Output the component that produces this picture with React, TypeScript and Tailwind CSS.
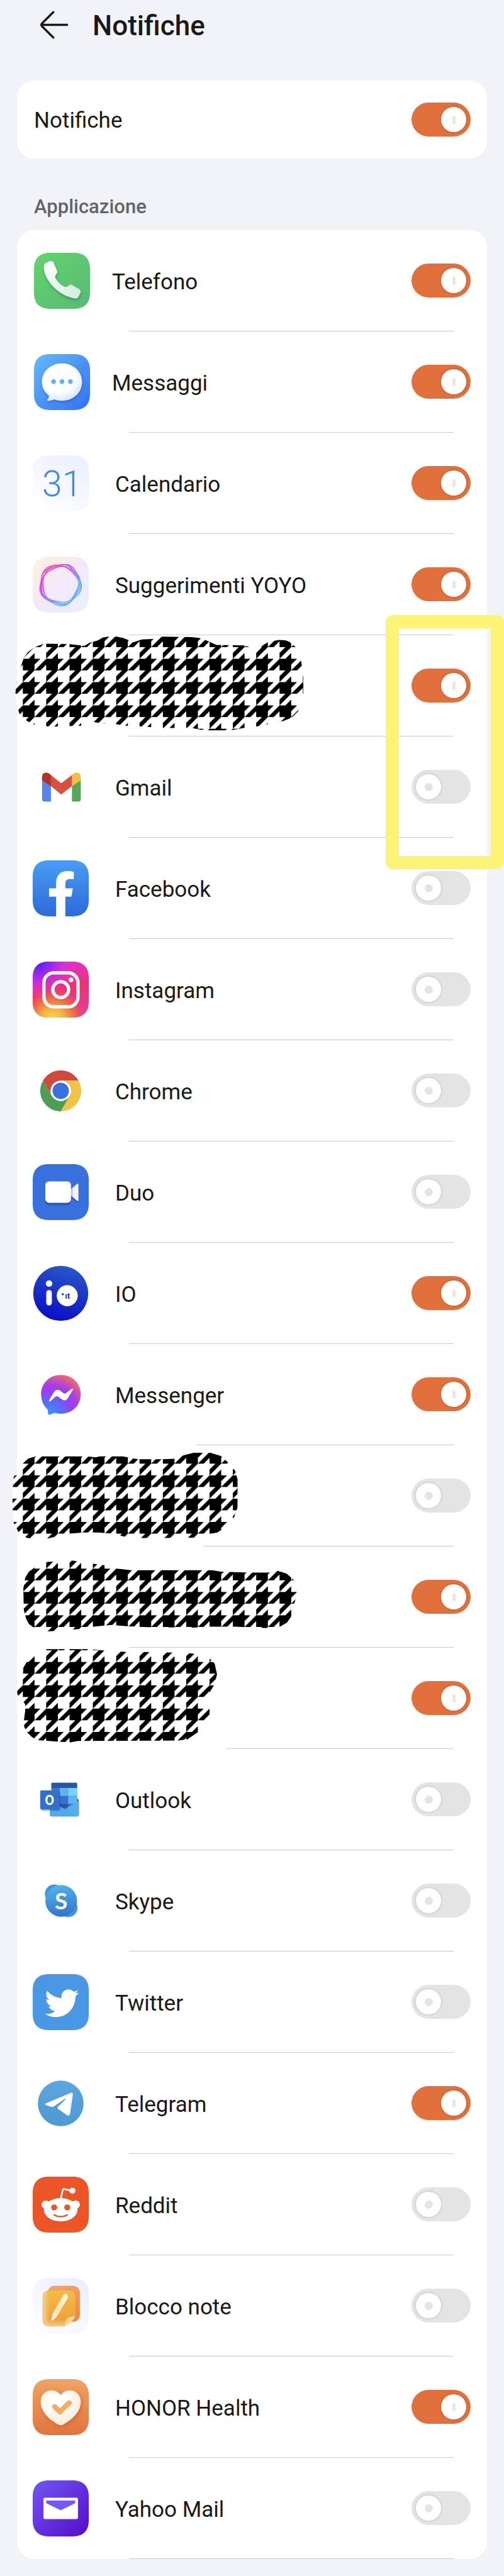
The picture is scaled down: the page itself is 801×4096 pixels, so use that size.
import { useId, useState } from 'react'
import type { ReactNode } from 'react'
import { FaTwitter } from 'react-icons/fa'

/* ---------- App icons, all on a 120x120 grid ---------- */

const Tile = ({ fill }: { fill: string }) => (
    <path
        d="M34 0 H86 C108 0 120 12 120 34 V86 C120 108 108 120 86 120 H34 C12 120 0 108 0 86 V34 C0 12 12 0 34 0Z"
        fill={fill}
    />
)

const PhoneIcon = () => (
    <>
        <defs>
            <linearGradient id="phone-bg" x1="0" y1="0" x2="1" y2="1">
                <stop offset="0" stopColor="#62d46c" />
                <stop offset="1" stopColor="#59b978" />
            </linearGradient>
            <linearGradient id="phone-fg" x1="0" y1="0" x2="1" y2="1">
                <stop offset="0" stopColor="#ffffff" />
                <stop offset="1" stopColor="#cfeedd" />
            </linearGradient>
        </defs>
        <Tile fill="url(#phone-bg)" />
        <path
            d="M34 18 C28 20 21 22 21 30 C21 58 52 92 88 98 C93 98 95 96 97 91 L100 85 Q101 80 95 77 L82 69 Q79 67 75 70 Q70 74 66 73 C58 69 50 62 46 54 Q44 50 49 44 Q51 41 49 37 L42 21 Q40 16 34 18Z"
            fill="url(#phone-fg)"
            style={{ filter: 'drop-shadow(1px 4px 3px rgba(30,110,60,.45))' }}
        />
    </>
)

const MessagesIcon = () => (
    <>
        <defs>
            <linearGradient id="msg-bg" x1="0" y1="0" x2="1" y2="1">
                <stop offset="0" stopColor="#64b9f9" />
                <stop offset="1" stopColor="#3470f4" />
            </linearGradient>
            <radialGradient id="msg-fg" cx="0.4" cy="0.35" r="0.7">
                <stop offset="0.6" stopColor="#ffffff" />
                <stop offset="1" stopColor="#d3e6f6" />
            </radialGradient>
        </defs>
        <Tile fill="url(#msg-bg)" />
        <path
            d="M60 20 C84 20 103 37 103 60 C103 83 84 100 60 100 Q51 100 43 97 Q36 101 29 100 Q27 99 29 97 Q33 93 32 89 C22 82 17 71 17 60 C17 37 36 20 60 20Z"
            fill="url(#msg-fg)"
            style={{ filter: 'drop-shadow(1px 3px 3px rgba(20,60,170,.4))' }}
        />
        <circle cx="42" cy="59" r="5" fill="#62b2ee" />
        <circle cx="60" cy="59" r="5" fill="#62b2ee" />
        <circle cx="78" cy="59" r="5" fill="#62b2ee" />
    </>
)

const CalendarIcon = () => (
    <>
        <defs>
            <linearGradient id="cal-bg" x1="0.9" y1="0" x2="0.2" y2="1">
                <stop offset="0" stopColor="#ebeeff" />
                <stop offset="1" stopColor="#ffffff" />
            </linearGradient>
        </defs>
        <Tile fill="url(#cal-bg)" />
        <text x="63" y="88" textAnchor="middle" fontSize="77" fontWeight="300" fill="#3f8ae6">31</text>
    </>
)

// Closed loop around the icon's centre, pushed in and out by a sine
const wavyLoop = (radius: number, swing: number, lobes: number, phase: number) => {
    const points: string[] = []
    for (let deg = 0; deg < 360; deg += 4) {
        const a = (deg * Math.PI) / 180
        const r = radius + swing * Math.sin(lobes * a + phase)
        points.push(`${(59 + r * Math.cos(a)).toFixed(1)} ${(60 + r * Math.sin(a)).toFixed(1)}`)
    }
    return `M${points.join(' L')}Z`
}

const YoyoIcon = () => (
    <>
        <defs>
            <linearGradient id="yoyo-bg" x1="0" y1="0" x2="1" y2="1">
                <stop offset="0" stopColor="#fef3d8" />
                <stop offset="0.5" stopColor="#f4e8fb" />
                <stop offset="1" stopColor="#e6f1ff" />
            </linearGradient>
            <linearGradient id="yoyo-ring" x1="0.1" y1="0.1" x2="0.8" y2="0.9">
                <stop offset="0.1" stopColor="#ea34b4" />
                <stop offset="0.35" stopColor="#c040f0" />
                <stop offset="0.6" stopColor="#7c70f2" />
                <stop offset="0.8" stopColor="#52a4f5" />
            </linearGradient>
        </defs>
        <Tile fill="url(#yoyo-bg)" />
        <g stroke="url(#yoyo-ring)" strokeWidth="1.5">
            <path
                fill="url(#yoyo-ring)"
                fillOpacity="0.4"
                fillRule="evenodd"
                d={wavyLoop(44, 2, 5, 0.6) + wavyLoop(38, 1.5, 5, 2.2)}
            />
            <path fill="none" d={wavyLoop(42, 2.5, 5, 1.6)} />
            <path fill="none" d={wavyLoop(41, 2.5, 4, 3)} />
        </g>
    </>
)

const GmailIcon = () => (
    <>
        <path d="M20 45 L39 57 V91 H25 Q20 91 20 86Z" fill="#5585ef" />
        <path d="M103 45 L84 57 V91 H98 Q103 91 103 86Z" fill="#58a65c" />
        <path d="M20 46 V38 Q20 29 29 29 Q33 29 39 34 V58Z" fill="#b13226" />
        <path d="M103 46 V38 Q103 29 94 29 Q90 29 84 34 V58Z" fill="#f0bf43" />
        <path d="M39 34 L61 52 L84 34 V58 L61 76 L39 58Z" fill="#d75040" />
    </>
)

const FacebookIcon = () => (
    <>
        <defs>
            <linearGradient id="fb-bg" x1="0" y1="0" x2="0" y2="1">
                <stop offset="0" stopColor="#499df4" />
                <stop offset="1" stopColor="#2e69d9" />
            </linearGradient>
        </defs>
        <Tile fill="url(#fb-bg)" />
        <path d="M50 120 V78 H35 V60 H50 V50 C50 32 59 23 75 23 Q82 23 88 25 V40 H80 C73 40 70 43 70 50 V60 H86 L83 78 H70 V120Z" fill="#fff" />
    </>
)

const InstagramIcon = () => (
    <>
        <defs>
            <linearGradient id="ig-base" x1="0.3" y1="0" x2="0.7" y2="1">
                <stop offset="0.1" stopColor="#e02fd8" />
                <stop offset="0.55" stopColor="#ea3474" />
                <stop offset="1" stopColor="#e63aa0" />
            </linearGradient>
            <radialGradient id="ig-violet" cx="0.1" cy="0" r="0.55">
                <stop offset="0.1" stopColor="#5a20f5" />
                <stop offset="0.5" stopColor="#9a26f2" stopOpacity="0.8" />
                <stop offset="1" stopColor="#d030e8" stopOpacity="0" />
            </radialGradient>
            <radialGradient id="ig-yellow" cx="0.36" cy="1.05" r="0.62">
                <stop offset="0" stopColor="#f8e04a" />
                <stop offset="0.35" stopColor="#f3b23e" />
                <stop offset="0.7" stopColor="#ec6a40" stopOpacity="0.8" />
                <stop offset="1" stopColor="#ea3c60" stopOpacity="0" />
            </radialGradient>
        </defs>
        <Tile fill="url(#ig-base)" />
        <Tile fill="url(#ig-violet)" />
        <Tile fill="url(#ig-yellow)" />
        <rect x="24" y="24" width="73" height="73" rx="21" fill="none" stroke="#fff" strokeWidth="7" />
        <circle cx="60" cy="60" r="17" fill="none" stroke="#fff" strokeWidth="7" />
        <circle cx="82" cy="39" r="5" fill="#fff" />
    </>
)

const ChromeIcon = () => (
    <>
        <path d="M22 38 A44 44 0 0 1 98 38 H60 V60 L41 71Z" fill="#d04a3b" />
        <path d="M98 38 A44 44 0 0 1 60 104 L79 71 L60 60 V38Z" fill="#f2c348" />
        <path d="M60 104 A44 44 0 0 1 22 38 L41 71 L60 60 L79 71Z" fill="#4e9d53" />
        <circle cx="60" cy="60" r="22" fill="#fff" />
        <circle cx="60" cy="60" r="17.5" fill="#3870de" />
    </>
)

const DuoIcon = () => (
    <>
        <Tile fill="#3870de" />
        <path d="M82 57 L94 45 Q98 42 98 46 V79 Q98 84 94 81 L82 71Z" fill="#2a57ac" />
        <rect x="26" y="41" width="56" height="47" rx="8" fill="#2a57ac" />
        <path d="M82 54 L94 43 Q98 40 98 44 V76 Q98 81 94 78 L82 67Z" fill="#f1f3f6" />
        <path d="M82 54 L86 50 V71 L82 67Z" fill="#c6c9ce" />
        <rect x="27" y="37" width="55" height="46" rx="8" fill="#fff" />
    </>
)

const IoIcon = () => (
    <>
        <defs>
            <linearGradient id="io-bg" x1="0.7" y1="0" x2="0.4" y2="1">
                <stop offset="0" stopColor="#2859c6" />
                <stop offset="1" stopColor="#0b0dc8" />
            </linearGradient>
        </defs>
        <circle cx="60" cy="60" r="59" fill="url(#io-bg)" />
        <circle cx="35" cy="39" r="7" fill="#fff" />
        <rect x="29" y="53" width="12" height="33" rx="6" fill="#fff" />
        <circle cx="74" cy="65" r="22.5" fill="#fff" />
        <rect x="62" y="60" width="5" height="4" rx="2" fill="#1b38c4" />
        <text x="69" y="72" fontSize="18" fontWeight="700" fill="#1b38c4">ıt</text>
    </>
)

const MessengerIcon = () => (
    <>
        <defs>
            <radialGradient id="fbm-bg" cx="0.2" cy="1" r="1.1">
                <stop offset="0" stopColor="#2f9df9" />
                <stop offset="0.25" stopColor="#4f74f8" />
                <stop offset="0.55" stopColor="#9a3df2" />
                <stop offset="0.7" stopColor="#a840e4" />
                <stop offset="1" stopColor="#f66c66" />
            </radialGradient>
        </defs>
        <path
            d="M60 18 C85 18 103 36 103 59 C103 83 85 101 60 101 Q53 101 47 99 L37 103 Q33 104 33 101 L32 92 C23 84 18 73 18 59 C18 36 36 18 60 18Z"
            fill="url(#fbm-bg)"
        />
        <path d="M35 72 L46 54 Q51 47 58 51 L66 57 Q68 59 71 57 L83 48 Q88 46 86 50 L75 68 Q70 75 64 71 L54 64 Q52 63 49 64 L38 74 Q34 76 35 72Z" fill="#fff" />
    </>
)

const OutlookIcon = () => (
    <>
        <defs>
            <linearGradient id="ol-env" x1="0" y1="0" x2="0.3" y2="1">
                <stop offset="0" stopColor="#3f86d6" />
                <stop offset="1" stopColor="#5ab2ea" />
            </linearGradient>
        </defs>
        <path d="M95 58 L99 61 L90 68Z" fill="#183a74" />
        <rect x="40" y="24" width="55" height="60" rx="2" fill="#3573cf" />
        <path d="M40 35 V26 Q40 24 42 24 H93 Q95 24 95 26 V35Z" fill="#2557a3" />
        <rect x="58" y="35" width="18" height="17" fill="#5fb4ec" />
        <rect x="76" y="35" width="19" height="17" fill="#74d5fb" />
        <rect x="76" y="52" width="19" height="17" fill="#5fb4ec" />
        <rect x="58" y="69" width="18" height="15" fill="#2859a8" />
        <path d="M37 66 L70 80 L99 62 V93 Q99 96 96 96 H40 Q37 96 37 93Z" fill="url(#ol-env)" />
        <path d="M70 80 L99 62 V94Z" fill="#58aee8" />
        <path d="M37 66 L98 96 H40 Q37 96 37 93Z" fill="#52aae6" />
        <rect x="18" y="43" width="41" height="41" rx="3" fill="#1c3f7c" opacity="0.4" />
        <rect x="16" y="40" width="41" height="41" rx="3" fill="#3271cb" />
        <text x="36" y="71" textAnchor="middle" fontSize="29" fontWeight="700" fill="#fff">O</text>
    </>
)

const SkypeIcon = () => (
    <>
        <defs>
            <linearGradient id="sk-bg" x1="0.4" y1="0" x2="0.6" y2="1">
                <stop offset="0" stopColor="#50b4e9" />
                <stop offset="1" stopColor="#3371cf" />
            </linearGradient>
        </defs>
        <circle cx="46" cy="45" r="20" fill="#3f97d8" />
        <circle cx="76" cy="75" r="20" fill="#4397dc" />
        <circle cx="61" cy="60" r="34" fill="url(#sk-bg)" />
        <text x="61" y="78" textAnchor="middle" fontSize="50" fontWeight="700" fontFamily="Lato, sans-serif" fill="#fff">S</text>
    </>
)

const TwitterIcon = () => (
    <>
        <Tile fill="#4a97e6" />
        <FaTwitter x="26" y="26" size={73} color="#fff" />
    </>
)

const TelegramIcon = () => (
    <>
        <defs>
            <linearGradient id="tg-bg" x1="0" y1="0" x2="0" y2="1">
                <stop offset="0" stopColor="#5ba6e0" />
                <stop offset="1" stopColor="#4e99d1" />
            </linearGradient>
        </defs>
        <circle cx="60" cy="60" r="49" fill="url(#tg-bg)" />
        <path
            d="M28 60 L80 38 Q86 36 86 41 L80 82 Q78 89 73 85 L55 72 Q51 70 55 66 L70 52 Q72 49 69 50 L46 66 Q43 68 39 67 L29 64 Q25 62 28 60Z"
            fill="#fff"
        />
    </>
)

const RedditIcon = () => (
    <>
        <Tile fill="#eb5528" />
        <path d="M60 48 L65 26 L82 30" fill="none" stroke="#fff" strokeWidth="3.5" strokeLinejoin="round" />
        <circle cx="85" cy="30" r="6.5" fill="#fff" />
        <circle cx="28" cy="60" r="9" fill="#fff" />
        <circle cx="92" cy="60" r="9" fill="#fff" />
        <ellipse cx="60" cy="71" rx="36" ry="25" fill="#fff" />
        <circle cx="46" cy="66" r="6.5" fill="#eb5528" />
        <circle cx="74" cy="66" r="6.5" fill="#eb5528" />
        <path d="M46 82 Q60 90 74 82" fill="none" stroke="#dc5c35" strokeWidth="3.5" strokeLinecap="round" />
    </>
)

const NotesIcon = () => (
    <>
        <defs>
            <linearGradient id="nt-bg" x1="0.9" y1="0" x2="0.2" y2="1">
                <stop offset="0" stopColor="#ebeeff" />
                <stop offset="1" stopColor="#fdfdff" />
            </linearGradient>
            <linearGradient id="nt-back" x1="0" y1="0" x2="0.4" y2="1">
                <stop offset="0" stopColor="#f2a763" />
                <stop offset="1" stopColor="#ee8c4c" />
            </linearGradient>
            <linearGradient id="nt-front" x1="0" y1="0" x2="0" y2="1">
                <stop offset="0" stopColor="#f3bc46" />
                <stop offset="0.8" stopColor="#f0a33b" />
                <stop offset="1" stopColor="#f2cb8a" />
            </linearGradient>
            <linearGradient id="nt-edge" x1="0" y1="0" x2="1" y2="0">
                <stop offset="0" stopColor="#f2d29a" />
                <stop offset="0.22" stopColor="#f2d29a" stopOpacity="0" />
            </linearGradient>
            <linearGradient id="nt-pen" x1="1" y1="0" x2="0" y2="1">
                <stop offset="0" stopColor="#fff8e8" />
                <stop offset="0.6" stopColor="#f9e2b0" />
                <stop offset="1" stopColor="#fffaf0" />
            </linearGradient>
        </defs>
        <Tile fill="url(#nt-bg)" />
        <rect x="32" y="17" width="69" height="77" rx="14" fill="url(#nt-back)" />
        <path d="M35 27 H78 Q91 27 91 42 V83 L68 104 H35 Q21 104 21 90 V42 Q21 27 35 27Z" fill="url(#nt-front)" />
        <path d="M35 27 H78 Q91 27 91 42 V83 L68 104 H35 Q21 104 21 90 V42 Q21 27 35 27Z" fill="url(#nt-edge)" />
        <path d="M91 82 Q88 93 68 104 Q71 88 76 85 Q82 83 91 82Z" fill="#f8d892" />
        <path d="M66 36 Q70 32 74 36 Q77 39 75 43 L52 83 L42 91 Q39 93 40 89 L43 76Z" fill="url(#nt-pen)" />
    </>
)

const HealthIcon = () => (
    <>
        <defs>
            <linearGradient id="hh-bg" x1="0" y1="0" x2="0" y2="1">
                <stop offset="0" stopColor="#efa464" />
                <stop offset="1" stopColor="#e2743f" />
            </linearGradient>
            <radialGradient id="hh-fg" cx="0.45" cy="0.35" r="0.65">
                <stop offset="0.3" stopColor="#ffffff" />
                <stop offset="1" stopColor="#f8e8d4" />
            </radialGradient>
        </defs>
        <Tile fill="url(#hh-bg)" />
        <path
            d="M60 34 C54 26 46 24 40 24 C26 24 17 35 17 49 C17 70 36 88 56 98 Q60 100 64 98 C84 88 103 70 103 49 C103 35 94 24 80 24 C74 24 66 26 60 34Z"
            fill="url(#hh-fg)"
            style={{ filter: 'drop-shadow(2px 3px 4px rgba(190,70,20,.5))' }}
        />
        <path d="M47 59 L58 70 L78 51" fill="none" stroke="#f2ad62" strokeWidth="11" strokeLinecap="round" strokeLinejoin="round" />
    </>
)

const YahooIcon = () => (
    <>
        <defs>
            <linearGradient id="yh-bg" x1="0" y1="0" x2="1" y2="1">
                <stop offset="0.05" stopColor="#7054f2" />
                <stop offset="0.95" stopColor="#560fcb" />
            </linearGradient>
        </defs>
        <Tile fill="url(#yh-bg)" />
        <rect x="23" y="37" width="74" height="46" rx="3" fill="#fff" />
        <path d="M29 43 H91 V49 L60 64 L29 49Z" fill="#7558f6" />
    </>
)

/* ---------- Houndstooth scribble that hides a private app ---------- */

const Redaction = ({ points, offset }: { points: string; offset: number }) => {
    const id = useId()
    return (
        <svg viewBox="0 0 720 217" className="-ml-[27px] h-[161px] w-[534px] shrink-0" aria-hidden="true">
            <defs>
                <pattern id={id} width="50" height="50" patternUnits="userSpaceOnUse" patternTransform={`translate(-1 ${offset})`}>
                    <rect width="50" height="50" fill="#fff" />
                    <path d="M0 0 H37.5 L25 12.5 V25 H0Z M50 0 V12.5 L37.5 25 H25Z M12.5 25 H25 L0 50 V37.5Z M25 37.5 V50 H12.5Z" fill="#000" />
                </pattern>
            </defs>
            <polygon points={points} fill={`url(#${id})`} />
        </svg>
    )
}

const SCRIBBLES = {
    first: '33,126 36,89 45,66 51,49 60,36 74,26 94,18 147,19 181,23 192,16 210,11 220,5 232,3 250,3 264,6 277,11 286,15 304,9 328,8 346,3 411,4 428,6 442,11 464,21 522,22 536,26 558,26 566,20 576,14 598,10 612,11 620,14 634,26 643,42 647,66 650,89 650,126 646,146 638,164 625,177 607,184 554,195 522,199 495,204 437,204 411,199 348,199 312,196 272,194 250,191 223,190 201,186 174,194 107,196 74,192 58,184 42,169 36,152',
    second: '27,96 29,69 36,55 49,39 60,29 76,24 187,24 205,26 214,24 263,24 295,30 348,30 375,29 388,23 415,16 451,16 473,23 489,37 504,55 509,73 509,133 502,154 489,165 475,181 466,187 455,189 417,198 353,199 304,199 268,196 237,189 210,187 179,187 143,190 103,200 65,200 56,198 40,187 29,165 27,147',
    third: '50,90 54,67 62,54 74,45 86,37 100,33 134,32 154,30 201,37 223,40 250,47 281,51 455,51 473,54 531,56 576,56 594,52 614,58 629,71 636,84 637,97 632,118 625,136 624,150 615,163 600,172 571,175 527,173 504,172 451,172 415,174 312,173 272,171 237,168 201,172 170,177 120,181 103,182 74,175 62,166 56,155 51,136',
    fourth: '37,98 37,79 49,57 50,43 58,29 74,17 100,3 187,3 237,7 272,9 308,9 402,11 417,13 437,25 450,24 460,34 465,57 460,78 449,96 449,144 440,156 424,181 402,196 382,199 167,200 150,203 134,202 80,198 68,191 58,181 52,170 51,158 54,135 54,121 38,101',
}

/* ---------- Switch ---------- */

const Switch = ({ id, label, defaultOn }: { id: string; label?: string; defaultOn: boolean }) => {
    const [on, setOn] = useState(defaultOn)

    return (
        <span className="grid h-[54px] w-[94px] shrink-0">
            <input
                id={id}
                type="checkbox"
                role="switch"
                aria-label={label}
                checked={on}
                onChange={() => setOn(!on)}
                className="col-start-1 row-start-1 h-full w-full cursor-pointer appearance-none rounded-full bg-[#e4e4e4] checked:bg-[#e2703c]"
            />
            <span className={`pointer-events-none col-start-1 row-start-1 flex items-center px-[7px] ${on ? 'justify-end' : 'justify-start'}`}>
                <span className="flex h-10 w-10 items-center justify-center rounded-full bg-white shadow-[0_0_2px_2px_rgba(0,0,0,0.07)]">
                    <span className={on ? 'h-[13px] w-[5px] rounded-full bg-[#f7e2d8]' : 'h-[13px] w-[13px] rounded-full bg-[#e4e4e4]'} />
                </span>
            </span>
        </span>
    )
}

/* ---------- App list ---------- */

interface AppRow {
    id: string
    name?: string
    icon?: ReactNode
    system?: boolean
    hidden?: ReactNode
    on: boolean
    line?: string
    highlight?: boolean
}

const APPS: AppRow[] = [
    { id: 'telefono', name: 'Telefono', icon: <PhoneIcon />, system: true, on: true },
    { id: 'messaggi', name: 'Messaggi', icon: <MessagesIcon />, system: true, on: true },
    { id: 'calendario', name: 'Calendario', icon: <CalendarIcon />, on: true },
    { id: 'yoyo', name: 'Suggerimenti YOYO', icon: <YoyoIcon />, on: true },
    { id: 'app-1', hidden: <Redaction points={SCRIBBLES.first} offset={0.5} />, on: true, highlight: true },
    { id: 'gmail', name: 'Gmail', icon: <GmailIcon />, on: false },
    { id: 'facebook', name: 'Facebook', icon: <FacebookIcon />, on: false },
    { id: 'instagram', name: 'Instagram', icon: <InstagramIcon />, on: false },
    { id: 'chrome', name: 'Chrome', icon: <ChromeIcon />, on: false },
    { id: 'duo', name: 'Duo', icon: <DuoIcon />, on: false },
    { id: 'io', name: 'IO', icon: <IoIcon />, on: true },
    { id: 'messenger', name: 'Messenger', icon: <MessengerIcon />, on: true, line: 'ml-[285px]' },
    { id: 'app-2', hidden: <Redaction points={SCRIBBLES.second} offset={14.5} />, on: false, line: 'ml-[296px]' },
    { id: 'app-3', hidden: <Redaction points={SCRIBBLES.third} offset={47.5} />, on: true },
    { id: 'app-4', hidden: <Redaction points={SCRIBBLES.fourth} offset={30.5} />, on: true, line: 'ml-[332px]' },
    { id: 'outlook', name: 'Outlook', icon: <OutlookIcon />, on: false },
    { id: 'skype', name: 'Skype', icon: <SkypeIcon />, on: false },
    { id: 'twitter', name: 'Twitter', icon: <TwitterIcon />, on: false },
    { id: 'telegram', name: 'Telegram', icon: <TelegramIcon />, on: true },
    { id: 'reddit', name: 'Reddit', icon: <RedditIcon />, on: false },
    { id: 'note', name: 'Blocco note', icon: <NotesIcon />, on: false },
    { id: 'health', name: 'HONOR Health', icon: <HealthIcon />, on: true },
    { id: 'yahoo', name: 'Yahoo Mail', icon: <YahooIcon />, on: false },
]

const Row = ({ app }: { app: AppRow }) => (
    <li className="relative flex h-[161px] flex-col">
        <div className="flex min-h-0 flex-1 items-center justify-between pr-[26px]">
            {app.hidden}
            {app.name && (
                <label
                    htmlFor={app.id}
                    className={`flex items-center ${app.system ? 'gap-[35px] pl-[27px]' : 'gap-[42px] pl-[25px]'}`}
                >
                    <svg viewBox="0 0 120 120" className="h-[89px] w-[89px] shrink-0" aria-hidden="true">
                        {app.icon}
                    </svg>
                    <span className="pt-[6px] text-[35px] leading-[48px]">{app.name}</span>
                </label>
            )}
            <Switch id={app.id} label={app.name ? undefined : 'App'} defaultOn={app.on} />
        </div>
        <div className={`mr-[53px] h-px shrink-0 bg-[#c9c9c9] ${app.line ?? 'ml-[178px]'}`} />
        {/* Marker frame around the two mail switches */}
        {app.highlight && (
            <div className="pointer-events-none absolute -top-[32px] -right-[27px] z-10 h-[404px] w-[188px] rounded-[11px] border-[21px] border-[#fdf376]" />
        )}
    </li>
)

const App = () => {
    return (
        <div className="min-h-screen bg-[#f1f3f8] px-[27px] pb-[27px] font-['Roboto',sans-serif] text-[#191919]">
            {/* Header */}
            <header className="flex h-[78px] items-center gap-[39px] pl-[36px]">
                <button type="button" aria-label="Indietro" className="shrink-0 cursor-pointer">
                    <svg viewBox="0 0 60 60" className="h-[45px] w-[45px]" fill="none" stroke="currentColor" strokeWidth="4.5" strokeLinecap="round" strokeLinejoin="round">
                        <path d="M59 30 H4 M29 3 L5 27 Q2 30 5 33 L29 57" />
                    </svg>
                </button>
                <h1 className="pt-1 text-[44px] leading-[56px] font-medium">Notifiche</h1>
            </header>

            <main>
                <section className="mt-[50px] flex h-[124px] items-center justify-between rounded-[27px] bg-white pr-[26px] pl-[27px]">
                    <label htmlFor="notifiche" className="pt-1 text-[35px] leading-[48px]">Notifiche</label>
                    <Switch id="notifiche" defaultOn={true} />
                </section>

                <h2 className="px-[27px] pt-[54px] pb-[14px] text-[31px] leading-[46px] font-medium text-[#636466]">Applicazione</h2>

                <ul className="rounded-[27px] bg-white">
                    {APPS.map((app) => (
                        <Row key={app.id} app={app} />
                    ))}
                </ul>
            </main>
        </div>
    )
}

export default App
